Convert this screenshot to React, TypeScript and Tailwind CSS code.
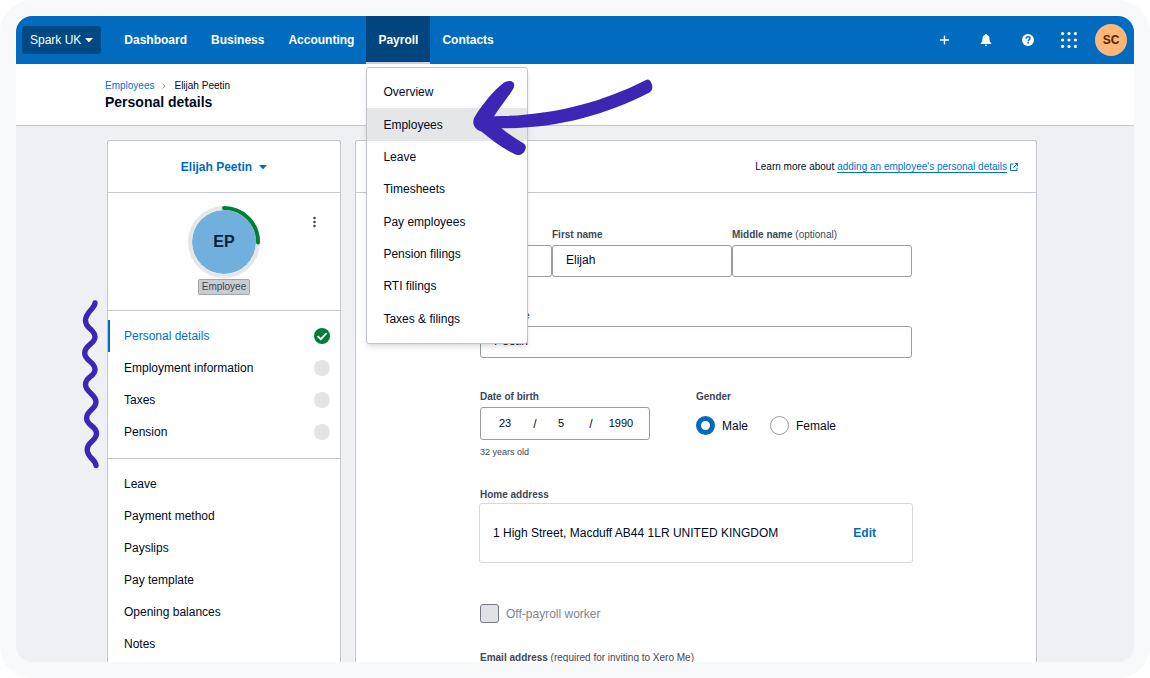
import React from 'react';
import clsx from 'clsx';

const navBefore = ['Dashboard', 'Business', 'Accounting'];

const payrollMenu = [
  'Overview',
  'Employees',
  'Leave',
  'Timesheets',
  'Pay employees',
  'Pension filings',
  'RTI filings',
  'Taxes & filings',
];

const setupSteps = [
  { label: 'Personal details', done: true },
  { label: 'Employment information', done: false },
  { label: 'Taxes', done: false },
  { label: 'Pension', done: false },
];

const employeeLinks = ['Leave', 'Payment method', 'Payslips', 'Pay template', 'Opening balances', 'Notes'];

const inputClass =
  'block h-8 w-full rounded-[3px] border border-[#9a9da5] bg-white px-[13px] pb-[3px] text-xs text-[#000a1e] outline-none focus:border-[#006bbf]';

const Caret = () => (
  <svg viewBox="0 0 8 4" className="h-1 w-2" fill="currentColor" aria-hidden="true">
    <path d="M0 0h8L4.6 3.7a.8.8 0 0 1-1.2 0z" />
  </svg>
);

const Arrow = () => (
  <svg
    viewBox="0 0 180 78"
    className="pointer-events-none absolute top-[63px] left-[107px] z-20 h-[78px] w-[180px]"
    fill="#3d26b5"
    aria-hidden="true"
  >
    <path d="M21 37.2C76 37 128 24 172.500 1.200C174.500 -.2 176.500 .6 177.600 2.600C179.200 5.200 179.600 7.600 179.200 9.600C178.900 11.600 178 12.700 176 13.700C132 36 84 49.500 28.500 49.200C36 55.500 42 59.500 50.400 64.200C52.800 65.600 53.200 68 52.600 70C51.600 73.500 49.500 75.400 46.500 76C44 76.300 42.200 75.500 40 74.300C28.500 68.500 18 60.500 8 52.300C3.500 51 .6 47.500 .3 44C.2 41 .8 39 2.500 36.500C10.500 24 20.500 11.500 31 3.500C33.500 2 36 1.600 38.500 2.300C41.500 3.400 41.900 6.400 40.300 9.800C34.500 19 27 28 21 37.200Z" />
  </svg>
);

const Squiggle = () => (
  <svg
    viewBox="0 0 20 172"
    className="pointer-events-none absolute top-[157px] -left-[27px] h-[172px] w-5"
    fill="none"
    stroke="#3d26b5"
    strokeWidth="5.4"
    strokeLinecap="round"
    strokeLinejoin="round"
    aria-hidden="true"
  >
    <path d="M14 5C13.500 11 4.500 14 4.500 22.500C4.500 31 14 31 14 39C14 46 3.700 47 3.700 55C3.700 63 14 63.500 14 71.500C14 79 4.500 78.500 4.500 86.500C4.500 94.500 15 96 15 104C15 111.500 5.600 112 5.600 120C5.600 128 15.500 127.500 15.500 135.500C15.500 143 6.200 143.500 6.200 151.500C6.200 160 14.500 161 15 167.500" />
  </svg>
);

const TopBar = () => (
  <header className="flex h-12 shrink-0 items-center bg-[#006bbf] pr-[7px] pl-1.5 text-white">
    <button type="button" className="flex h-7 items-center gap-1 rounded-[3px] bg-[#004a84] px-2 text-xs">
      Spark UK
      <Caret />
    </button>
    <nav className="ml-[11px] flex h-full text-xs font-bold">
      {navBefore.map((item) => (
        <a key={item} href="#" className="flex items-center px-3">
          {item}
        </a>
      ))}
      <div className="relative">
        <a href="#" className="flex h-full items-center border-b-2 border-[#c7d0df] bg-[#00457d] px-3 pt-0.5">
          Payroll
        </a>
        {/* Payroll dropdown */}
        <ul className="absolute top-[51px] left-0 z-10 flex h-[277px] w-[162px] flex-col rounded-[3px] border border-[#c0c3c9] bg-white py-2 font-normal text-[#000a1e] shadow-md">
          {payrollMenu.map((item) => (
            <li key={item} className={clsx('flex flex-1', item === 'Employees' && 'bg-[#e5e6e8]')}>
              <a href="#" className="flex flex-1 items-center px-4">
                {item}
              </a>
            </li>
          ))}
        </ul>
        <Arrow />
      </div>
      <a href="#" className="flex items-center px-3">
        Contacts
      </a>
    </nav>

    <div className="ml-auto flex items-center">
      <button type="button" aria-label="Add new" className="flex h-8 w-[42px] items-center justify-center">
        <svg viewBox="0 0 10 10" className="size-2.5" stroke="currentColor" strokeWidth="1.400">
          <path d="M5.500.5v9M1 5h9" />
        </svg>
      </button>
      <button type="button" aria-label="Notifications" className="flex h-8 w-[42px] items-center justify-center">
        <svg viewBox="0 0 12 12" className="size-3" fill="currentColor">
          <path d="M6 0c.6 0 1 .4 1 1 1.600.5 2.500 1.800 2.500 3.600 0 2.400.4 3.600 1.700 4.400v1H.8V9c1.300-.8 1.700-2 1.700-4.400C2.500 2.800 3.400 1.500 5 1c0-.6.400-1 1-1zM4.800 10.700h2.400a1.200 1.200 0 0 1-2.400 0z" />
        </svg>
      </button>
      <button type="button" aria-label="Help" className="flex h-8 w-[42px] items-center justify-center">
        <svg viewBox="0 0 12 12" className="size-3">
          <circle cx="6" cy="6" r="6" fill="#fff" />
          <path d="M4 4.700C4 3.500 4.900 2.800 6 2.800s2 .7 2 1.700c0 1.300-1.900 1.400-1.900 2.700" fill="none" stroke="#006bbf" strokeWidth="1.400" />
          <circle cx="6.100" cy="8.900" r=".85" fill="#006bbf" />
        </svg>
      </button>
      <button type="button" aria-label="Apps" className="flex h-8 w-10 items-center justify-center">
        <svg viewBox="0 0 16 16" className="size-4" fill="currentColor">
          {[1.6, 8, 14.4].map((cy) =>
            [1.6, 8, 14.4].map((cx) => <circle key={`${cx}-${cy}`} cx={cx} cy={cy} r="1.600" />)
          )}
        </svg>
      </button>
      <button type="button" className="ml-1.5 size-8 rounded-full bg-[#ffb678] text-xs font-bold text-[#4d2400]">
        SC
      </button>
    </div>
  </header>
);

const PageHeader = () => (
  <div className="h-[62px] shrink-0 border-b border-[#c4c7cd] bg-white pt-3.5 pl-[89px]">
    <div className="flex items-center gap-2 text-[10px] leading-4">
      <a href="#" className="text-[#0073c7]">
        Employees
      </a>
      <svg viewBox="0 0 4 6" className="h-1.5 w-1" fill="none" stroke="#8a8f99" aria-hidden="true">
        <path d="M.5.5 3 3 .5 5.500" />
      </svg>
      <span>Elijah Peetin</span>
    </div>
    <h1 className="text-sm leading-4 font-bold">Personal details</h1>
  </div>
);

const Sidebar = () => (
  <aside className="relative w-[234px] shrink-0 rounded-t-[3px] border border-b-0 border-[#c4c7cd] bg-white">
    <Squiggle />
    <div className="flex h-[52px] items-center justify-center border-b border-[#c4c7cd]">
      <button type="button" className="flex items-center gap-[7px] text-xs font-bold text-[#006bbf]">
        Elijah Peetin
        <Caret />
      </button>
    </div>

    <div className="relative flex h-[118px] flex-col items-center border-b border-[#c4c7cd] pt-[13px]">
      <div className="relative flex size-[72px] items-center justify-center">
        <svg viewBox="0 0 72 72" className="absolute inset-0" fill="none" aria-hidden="true">
          <circle cx="36" cy="36" r="32" fill="#71b0dc" />
          <circle cx="36" cy="36" r="34" stroke="#e5e6e8" strokeWidth="4" />
          <path d="M36 2a34 34 0 0 1 34 34v.6" stroke="#007d38" strokeWidth="4" strokeLinecap="round" />
        </svg>
        <span className="relative text-base font-bold text-[#00213d]">EP</span>
      </div>
      <span className="mt-px rounded-[2px] border border-[#a0a5ab] bg-[#c9cdd1] px-[3px] text-[10px] leading-[14px] text-[#404756]">
        Employee
      </span>
      <button type="button" aria-label="More options" className="absolute top-5 right-4 flex h-[18px] w-5 items-center justify-center">
        <svg viewBox="0 0 4 12" className="h-3 w-1" fill="#404756">
          <circle cx="2.500" cy="2" r="1.300" />
          <circle cx="2.500" cy="6" r="1.300" />
          <circle cx="2.500" cy="10" r="1.300" />
        </svg>
      </button>
    </div>

    <nav className="border-b border-[#c4c7cd] pt-[9px] pb-2.5 text-xs">
      {setupSteps.map((step) => (
        <a
          key={step.label}
          href="#"
          className={clsx(
            'flex h-8 items-center justify-between border-l-2 pr-2.5 pl-3.5',
            step.done ? 'border-[#006bbf] text-[#0073c7]' : 'border-transparent'
          )}
        >
          {step.label}
          {step.done ? (
            <svg viewBox="0 0 16 16" className="size-4" fill="none" aria-hidden="true">
              <circle cx="8" cy="8" r="8" fill="#007d38" />
              <path d="m3.600 8.200 3.200 3 5.800-6" stroke="#fff" strokeWidth="1.800" />
            </svg>
          ) : (
            <span className="size-4 rounded-full bg-[#e3e4e6]" />
          )}
        </a>
      ))}
    </nav>

    <nav className="pt-[9px] text-xs">
      {employeeLinks.map((item) => (
        <a key={item} href="#" className="flex h-8 items-center px-4">
          {item}
        </a>
      ))}
    </nav>
  </aside>
);

const DetailsForm = () => (
  <main className="min-w-0 flex-1 rounded-t-[3px] border border-b-0 border-[#c4c7cd] bg-white">
    <div className="flex h-[52px] items-center justify-end gap-[3px] border-b border-[#c4c7cd] pr-[18px] text-[10px]">
      <span>Learn more about</span>
      <a href="#" className="flex items-center gap-[3px] text-[#0073c7]">
        <span className="underline underline-offset-2">adding an employee's personal details</span>
        <svg viewBox="0 0 8 8" className="size-2" fill="none" stroke="currentColor" aria-hidden="true">
          <path d="M3.500 1h-3v6.500H7V4.500M4.800.5h2.700v2.700M7.500.5 3.500 4.500" />
        </svg>
      </a>
    </div>

    <form className="ml-[124px] w-[432px] pt-[35px] text-xs">
      <div className="flex">
        <div className="w-[72px]">
          <label htmlFor="title" className="block h-[17px] text-[10px] leading-[13px] font-bold text-[#404756]">
            Title
          </label>
          <input id="title" type="text" className={inputClass} />
        </div>
        <div className="flex-1">
          <label htmlFor="first-name" className="block h-[17px] text-[10px] leading-[13px] font-bold text-[#404756]">
            First name
          </label>
          <input id="first-name" type="text" defaultValue="Elijah" className={inputClass} />
        </div>
        <div className="flex-1">
          <label htmlFor="middle-name" className="block h-[17px] text-[10px] leading-[13px] font-bold text-[#404756]">
            Middle name <span className="font-normal">(optional)</span>
          </label>
          <input id="middle-name" type="text" className={inputClass} />
        </div>
      </div>

      <div className="mt-8">
        <label htmlFor="last-name" className="block h-[17px] text-[10px] leading-[13px] font-bold text-[#404756]">
          Last name
        </label>
        <input id="last-name" type="text" defaultValue="Peetin" className={inputClass} />
      </div>

      <div className="mt-8 flex">
        <fieldset className="w-[216px]">
          <legend className="h-[17px] text-[10px] leading-[13px] font-bold text-[#404756]">Date of birth</legend>
          <div className="flex h-[33px] w-[170px] items-center rounded-[3px] border border-[#9a9da5] text-[11px]">
            <input aria-label="Day" defaultValue="23" className="w-12 text-center outline-none" />
            <span className="w-3 text-center text-xs">/</span>
            <input aria-label="Month" defaultValue="5" className="w-11 pr-1 text-center outline-none" />
            <span className="w-3 text-center text-xs">/</span>
            <input aria-label="Year" defaultValue="1990" className="w-12 text-center outline-none" />
          </div>
          <p className="mt-1.5 text-[9px] leading-3 text-[#404756]">32 years old</p>
        </fieldset>
        <fieldset>
          <legend className="h-[17px] text-[10px] leading-[13px] font-bold text-[#404756]">Gender</legend>
          <div className="flex h-[33px] items-center gap-[22px] pt-1">
            <label className="flex items-center gap-[7px]">
              <input
                type="radio"
                name="gender"
                defaultChecked
                className="size-[19px] appearance-none rounded-full border border-[#9a9da5] bg-white checked:border-[5px] checked:border-[#006bbf]"
              />
              Male
            </label>
            <label className="flex items-center gap-[7px]">
              <input
                type="radio"
                name="gender"
                className="size-[19px] appearance-none rounded-full border border-[#9a9da5] bg-white checked:border-[5px] checked:border-[#006bbf]"
              />
              Female
            </label>
          </div>
        </fieldset>
      </div>

      <div className="mt-[30px]">
        <h2 className="h-[15px] text-[10px] leading-[13px] font-bold text-[#404756]">Home address</h2>
        <div className="-mx-px flex h-[60px] items-center justify-between rounded-[3px] border border-[#d6d8dc] pr-9 pl-[13px]">
          <span>1 High Street, Macduff AB44 1LR UNITED KINGDOM</span>
          <button type="button" className="font-bold text-[#006bbf]">
            Edit
          </button>
        </div>
      </div>

      <label className="mt-[41px] flex items-center gap-[7px] text-[#80858f]">
        <input
          type="checkbox"
          disabled
          className="size-[19px] appearance-none rounded-[3px] border border-[#747985] bg-[#e1e2e5]"
        />
        Off-payroll worker
      </label>

      <div className="mt-7">
        <label htmlFor="email" className="block h-[17px] text-[10px] leading-[13px] font-bold text-[#404756]">
          Email address <span className="font-normal">(required for inviting to Xero Me)</span>
        </label>
        <input id="email" type="email" className={inputClass} />
      </div>
    </form>
  </main>
);

const App = () => {
  return (
    <div className="h-screen bg-white font-['Liberation_Sans',Arial,sans-serif] text-[#000a1e]">
      <div className="h-full rounded-[32px] bg-[#f8f9fb] p-4">
        <div className="flex h-full flex-col overflow-hidden rounded-2xl bg-[#eff0f3]">
          <TopBar />
          <PageHeader />
          <div className="flex min-h-0 flex-1 gap-3.5 pt-3.5 pr-[97px] pl-[91px]">
            <Sidebar />
            <DetailsForm />
          </div>
        </div>
      </div>
    </div>
  );
};

export default App;
